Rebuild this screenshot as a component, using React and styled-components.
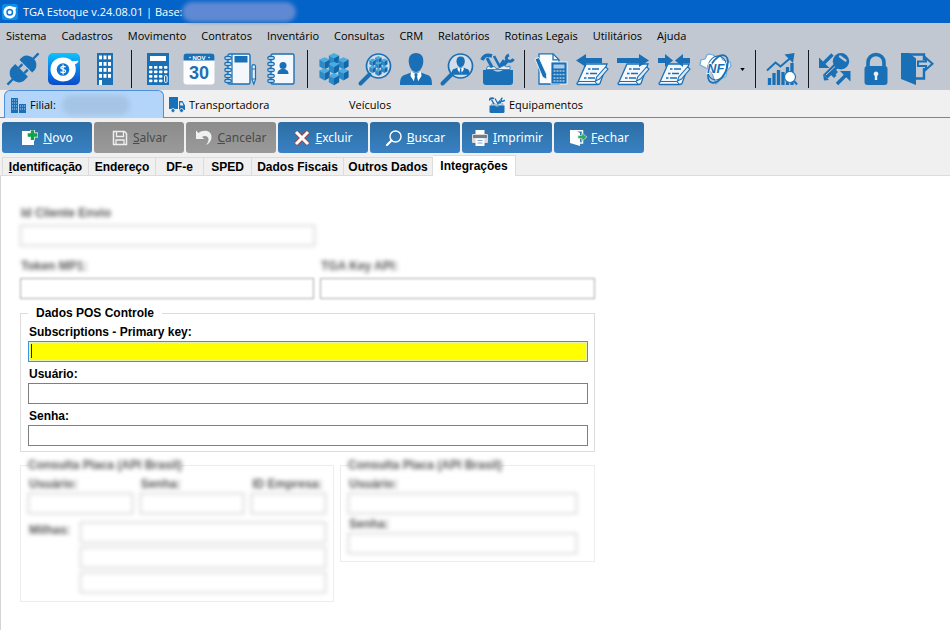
import React from "react";
import styled, { createGlobalStyle, css } from "styled-components";

const C = {
  blue: "#1a70b6",
  light: "#3aa0da",
  dark: "#145f9f",
  steel: "#c1c8d1",
  paper: "#f4f7fb",
};

const UI = '"Open Sans", "Noto Sans", sans-serif';
const FORM = '"Liberation Sans", Arial, sans-serif';

const GlobalStyle = createGlobalStyle`
  *, *::before, *::after { box-sizing: border-box; }
  html, body, #root { min-height: 100vh; }
  body { margin: 0; background: #fff; color: #000; font: 11px/16px ${UI}; }
  #root { display: flex; flex-direction: column; }
  button { font: inherit; color: inherit; border: 0; padding: 0; background: none; }
`;

/* ---------- window chrome ---------- */

const TitleBar = styled.header`
  display: flex;
  align-items: center;
  height: 23px;
  padding-left: 2px;
  color: #fff;
  background: #0463c8;
`;

const AppTitle = styled.h1`
  margin: 0 0 0 5px;
  font: 400 11px/16px ${UI};
  white-space: nowrap;
`;

const Redacted = styled.span`
  flex: none;
  width: ${(p) => p.$width}px;
  height: 20px;
  margin-left: ${(p) => p.$gap || 0}px;
  border-radius: 10px;
  background: ${(p) => p.$tone};
  filter: blur(2px);
`;

const MenuBar = styled.nav`
  display: flex;
  gap: 15px;
  height: 23px;
  padding-left: 6px;
  background: ${C.steel};
`;

const MenuItem = styled.button`
  line-height: 25px;
  height: 23px;
  white-space: nowrap;
`;

const ToolBar = styled.div`
  display: flex;
  align-items: center;
  height: 44px;
  padding: 2px 0 0 2px;
  overflow: hidden;
  background: ${C.steel};
`;

const ToolButton = styled.button`
  flex: none;
  display: flex;
  align-items: center;
  justify-content: center;
  width: 41px;
  height: 40px;
  svg { width: 32px; height: 32px; overflow: visible; }
`;

const Separator = styled.span`
  flex: none;
  display: flex;
  justify-content: center;
  width: 12px;
  &::before { content: ""; width: 1px; height: 38px; background: #15181c; }
`;

const DropButton = styled.button`
  flex: none;
  display: flex;
  align-items: center;
  justify-content: center;
  width: 14px;
  height: 40px;
  svg { width: 5px; height: 3px; }
`;

const WindowTabs = styled.div`
  display: flex;
  align-items: flex-end;
  height: 28px;
  padding-left: 4px;
  background: #f0f0f0;
  border-bottom: 1px solid #4c8fdc;
  box-shadow: 0 1px 0 #a9c9ec;
`;

const WindowTab = styled.button`
  display: flex;
  align-items: center;
  width: 160px;
  height: 24px;
  padding-left: 5px;
  gap: 4px;
  white-space: nowrap;
  svg { width: 16px; height: 16px; }
  ${(p) =>
    p.$active &&
    css`
      height: 28px;
      margin-bottom: -1px;
      border: 1px solid #4c8fdc;
      border-bottom: 0;
      border-radius: 6px 6px 0 0;
      background: #b3d5f9;
    `}
`;

/* ---------- command buttons ---------- */

const Commands = styled.div`
  display: flex;
  gap: 2px;
  padding: 4px 2px 3px;
  background: #f0f0f0;
`;

const Command = styled.button`
  display: flex;
  align-items: center;
  justify-content: center;
  gap: 4px;
  width: 90px;
  height: 31px;
  border-radius: 3px;
  font: 12px/16px "Noto Sans", sans-serif;
  color: #fff;
  background: linear-gradient(#2e6da4, #337ab7 60%, #3a80c4);
  &:disabled { color: #4a4a4a; background: linear-gradient(#8c8c8c, #9a9a9a); }
  svg { flex: none; width: 18px; height: 16px; }
`;

/* ---------- page tabs and form ---------- */

const PageTabs = styled.div`
  display: flex;
  align-items: flex-end;
  height: 20px;
  padding-left: 2px;
  background: #f0f0f0;
  border-bottom: 1px solid #dcdcdc;
`;

const PageTab = styled.button`
  flex: none;
  width: ${(p) => p.$width}px;
  height: 18px;
  font: 700 12px/18px ${FORM};
  white-space: nowrap;
  border: 1px solid #dcdcdc;
  border-width: 1px 1px 0 0;
  &:first-child { border-left-width: 1px; }
  ${(p) =>
    p.$active &&
    css`
      height: 21px;
      margin-bottom: -1px;
      background: #fff;
    `}
`;

const Page = styled.main`
  flex: 1;
  padding: 29px 19px 0;
  border-left: 1px solid #d4d4d4;
  background: #fff;
  font: 700 12px/16px ${FORM};
`;

const FormBody = styled.form`
  display: flex;
  flex-direction: column;
  max-width: 575px;
`;

const Columns = styled.div`
  display: grid;
  grid-template-columns: ${(p) => p.$cols};
  column-gap: ${(p) => p.$gap ?? 7}px;
  align-items: start;
  margin-top: ${(p) => p.$top || 0}px;
`;

const Field = styled.label`
  display: flex;
  flex-direction: column;
  gap: ${(p) => p.$gap || 1}px;
`;

const FieldName = styled.span`
  height: 16px;
  padding-left: 1px;
  white-space: nowrap;
  ${(p) => p.$hidden && css`color: #555; filter: blur(2px);`}
`;

const TextBox = styled.input`
  width: 100%;
  height: 21px;
  padding: 1px 3px;
  border: 1px solid #7f7f7f;
  border-radius: 0;
  outline: 0;
  background: #fff;
  font: 12px/16px ${FORM};
  ${(p) => p.$soft && css`border-color: #a8a8a8; filter: blur(1px);`}
  ${(p) => p.$hidden && css`border-color: #bcbcbc; filter: blur(2px);`}
  ${(p) =>
    p.$current &&
    css`
      border-color: #3c94e4;
      background: #ff0;
      box-shadow: inset 0 0 0 1px #e6f0b0;
    `}
`;

const CaretBox = styled.span`
  position: relative;
  display: block;
  height: 21px;
  &::after {
    content: "";
    position: absolute;
    left: 3px;
    top: 3px;
    width: 1px;
    height: 14px;
    background: #222;
  }
`;

const Group = styled.fieldset`
  min-width: 0;
  margin: ${(p) => p.$top || 0}px 0 0;
  padding: ${(p) => p.$pad};
  border: 1px solid ${(p) => (p.$hidden ? "#ececec" : "#dcdcdc")};
`;

const GroupName = styled.legend`
  height: 16px;
  padding: 0 8px;
  ${(p) => p.$hidden && css`padding: 0; color: #555; filter: blur(2px);`}
`;

const Stack = styled.div`
  display: flex;
  flex-direction: column;
  gap: ${(p) => p.$gap}px;
`;

/* ---------- icons ---------- */

const Svg = ({ children, box = 32, ...rest }) => (
  <svg viewBox={`0 0 ${box} ${box}`} fill="none" aria-hidden="true" {...rest}>
    {children}
  </svg>
);

const Plug = () => (
  <Svg>
    <g transform="rotate(-45 16 16)" fill={C.blue} stroke={C.blue}>
      <path d="M14 7v18H8a9 9 0 0 1-7-9 9 9 0 0 1 7-9z" stroke="none" />
      <path d="M20 7v18h4a9 9 0 0 0 7-9 9 9 0 0 0-7-9z" stroke="none" />
      <path d="M14 12.2h5M14 19.8h5M-6 16H4M28 16h10" strokeWidth="2.4" fill="none" />
    </g>
  </Svg>
);

const Brand = () => (
  <Svg>
    <defs>
      <linearGradient id="brandFill" x1="0" y1="0" x2="0" y2="1">
        <stop offset="0" stopColor="#0cc4fb" />
        <stop offset=".45" stopColor="#0a86ec" />
        <stop offset="1" stopColor="#0a4bc8" />
      </linearGradient>
    </defs>
    <rect width="32" height="32" rx="5" fill="url(#brandFill)" />
    <path d="M2.500 16.500C2.500 9 8 4.600 15 4.600c4 0 7 1.400 9 3.600l6.500-.4c-.6 1.800-1.700 3-3.600 3.500 3.200 9-2.500 17.200-11.700 17.200C8 28.500 2.500 23.500 2.500 16.500z" fill="#fff" />
    <circle cx="15" cy="16.500" r="6.300" fill="#0b76d8" />
    <path d="M17.600 14.200c-.6-1-4.600-1.500-4.800.6-.2 2 5 1.200 4.800 3.400-.2 2-4.300 1.700-5.200.4M15.100 11.600v9.800" stroke="#fff" strokeWidth="1.300" />
  </Svg>
);

const Building = () => (
  <Svg>
    <path d="M8 0h16v32H8z" fill={C.blue} />
    {[2.5, 9, 15, 21].map((y) =>
      [10, 14.500, 19].map((x) => <rect key={`${x}-${y}`} x={x} y={y} width="3" height="3.800" fill="#fff" />)
    )}
    <path d="M10 27h3v5h-3z" fill="#fff" />
  </Svg>
);

const Calculator = () => (
  <Svg>
    <rect x="5" width="22" height="32" fill={C.blue} />
    <rect x="8" y="3" width="16" height="5" fill="#fff" />
    {[13, 17.500, 22, 26.500].map((y, r) =>
      [7, 12, 17, 22].map((x, c) =>
        c === 3 && r > 1 ? null : <rect key={`${x}-${y}`} x={x} y={y} width="3.400" height="2.800" rx=".8" fill="#fff" />
      )
    )}
    <rect x="22.500" y="22.500" width="2.600" height="7" rx="1.300" stroke="#fff" />
  </Svg>
);

const Calendar = () => (
  <Svg>
    <rect x=".5" y=".5" width="31" height="31" rx="3" fill="#fdfdfe" />
    <path d="M.5 7.500V3.500a3 3 0 0 1 3-3h25a3 3 0 0 1 3 3v4z" fill={C.blue} />
    <circle cx="7" cy="4.500" r=".8" fill="#fff" />
    <circle cx="26" cy="4.500" r=".8" fill="#fff" />
    <text x="16" y="6.500" textAnchor="middle" fontFamily="Liberation Sans" fontWeight="700" fontSize="6" fill="#fff">NOV</text>
    <text x="16" y="25.500" textAnchor="middle" fontFamily="Liberation Sans" fontWeight="700" fontSize="18" fill={C.blue}>30</text>
  </Svg>
);

const Rings = () => (
  <g stroke={C.blue} strokeWidth="1.300" fill="#e3ebf4">
    {[3.500, 9.500, 15.500, 21.500, 26.500].map((y) => (
      <rect key={y} x=".8" y={y} width="6.500" height="3" rx="1.500" />
    ))}
  </g>
);

const Notebook = () => (
  <Svg>
    <rect x="4" y="1" width="22" height="30" rx="1.500" fill={C.paper} stroke={C.blue} strokeWidth="1.400" />
    <path d="M8 1v30" stroke={C.blue} strokeWidth="1.200" />
    <path d="M10.500 3h13v6.500h-13z" fill={C.blue} />
    <Rings />
    <path d="M28 13.500c0-2.500 3.500-2.500 3.500 0v13L29.800 31 28 26.500zM28 16h3.500M28 26h3.500" stroke={C.blue} strokeWidth="1.200" fill="#e6eef6" />
  </Svg>
);

const Contacts = () => (
  <Svg>
    <rect x="6" y="1" width="23" height="30" rx="1.500" fill={C.paper} stroke={C.blue} strokeWidth="1.400" />
    <g transform="translate(2 0)"><Rings /></g>
    <circle cx="18" cy="12.500" r="3.500" fill={C.blue} />
    <path d="M12.500 21c0-3.500 2-4.500 4.200-5h2.600c2.200.5 4.200 1.500 4.200 5z" fill={C.blue} />
  </Svg>
);

const CUBES = [[16, 2.8], [6.6, 7], [25.4, 7], [16, 11.5], [6.6, 18], [25.4, 18], [16, 22.8]];

const Cubes = () => (
  <g>
    {CUBES.map(([x, y]) => (
      <g key={`${x}-${y}`} transform={`translate(${x} ${y})`}>
        <path d="M0-2.8 5.200-.4 0 2.400-5.200-.4z" fill="#48ade0" />
        <path d="M-5.200-.4 0 2.400v7L-5.200 6.400z" fill="#2a8bcb" />
        <path d="M5.200-.4 0 2.400v7l5.200-3z" fill="#1366a8" />
      </g>
    ))}
  </g>
);

const CubeStack = () => <Svg><Cubes /></Svg>;

const Lens = () => (
  <g stroke={C.blue}>
    <circle cx="19.500" cy="13" r="12" strokeWidth="1.700" fill="#d3deea" />
    <path d="M10.500 21.500 1.500 30.500" strokeWidth="4" strokeLinecap="round" />
  </g>
);

const CubeSearch = () => (
  <Svg><Lens /><g transform="translate(9.500 3) scale(.62)"><Cubes /></g></Svg>
);

const Bust = () => (
  <g>
    <path d="M16 0c5 0 7.500 3.500 7.300 8.500C23 14 20 19 16 19S9 14 8.700 8.500C8.500 3.500 11 0 16 0z" fill={C.blue} />
    <path d="M0 32c0-7 1.500-9.500 6-10.500l5-2h10l5 2c4.500 1 6 3.500 6 10.500z" fill={C.blue} />
    <path d="M11 18.500 16 21l5-2.500.5 4.500L16 31.500 10.500 23z" fill="#fff" />
    <path d="m14.300 21h3.400l-.6 2.500 1.200 5.500-2.300 3-2.300-3 1.200-5.500z" fill={C.blue} />
  </g>
);

const Person = () => <Svg><Bust /></Svg>;

const PersonSearch = () => (
  <Svg><Lens /><g transform="translate(10.500 3.500) scale(.57)"><Bust /></g></Svg>
);

const Toolbox = () => (
  <Svg>
    <g stroke={C.blue}>
      <path d="m5 5 6 11" strokeWidth="3" />
      <path d="M0 7c2-5 5-5.500 10-4" strokeWidth="3.600" />
      <path d="M12 3 18 14M22 7l-5 7" strokeWidth="2.600" />
      <path d="M27 2c-3 1-3.500 4-1.500 5.500s4.500 1 6-1.500" strokeWidth="3" />
      <path d="M25 8l-7 8" strokeWidth="3.600" />
    </g>
    <path d="m4 16.500 2-3.500 3 1.500 3-1 3 2.500 4-2 3-1.500 3 1.500 3-1v3.500z" fill="#e6eef6" stroke={C.blue} strokeWidth=".8" />
    <path d="M1 17h30v12a3 3 0 0 1-3 3H4a3 3 0 0 1-3-3z" fill={C.blue} />
    <path d="M11 17q5 3.500 10 0z" fill="#b8d0e6" />
  </Svg>
);

const DocCalc = () => (
  <Svg>
    <path d="M4 .8h14l6 6V31H4z" fill="#fbfcfe" stroke={C.blue} strokeWidth="1.300" />
    <path d="M18 .8v6h6" stroke={C.blue} strokeWidth="1.300" />
    <path d="m0 6 4-1.500L11.500 21l.3 5.500L7.500 24z" fill={C.blue} stroke="#fff" strokeWidth=".8" />
    <rect x="16" y="9" width="16" height="22" fill={C.blue} stroke="#fff" strokeWidth=".8" />
    <path d="M18.500 11.500h11v4h-11z" fill="#a9cbe6" />
    {[18, 21.500, 25, 28].map((y) => (
      <path key={y} d={`M18.500 ${y}h11`} stroke="#a9cbe6" strokeWidth="1.600" strokeDasharray="2 1" />
    ))}
  </Svg>
);

const Sheet = () => (
  <g>
    <path d="M10 11h21l-7 19.500c-1 1-2 1-3 1H1.500C.5 31 1 30 2 29z" fill="#f4f7fb" stroke={C.blue} strokeWidth="1.300" />
    <path d="M12 16h11M10 20.500h11M8 25h11" stroke={C.blue} strokeWidth="1.300" strokeDasharray="2.500 1.500 9" />
    <path d="m29.500 14 2.500 2-8.500 10-4 2 1.200-4z" fill="#dce9f4" stroke={C.blue} strokeWidth="1.100" />
    <path d="M2 28.500h17l2 2.500" stroke={C.blue} strokeWidth="1.200" />
  </g>
);

const SheetLeft = () => (
  <Svg><Sheet /><path d="M0 7.500 10 1v4h16v5H10v4z" fill={C.blue} /></Svg>
);
const SheetRight = () => (
  <Svg><Sheet /><path d="M32 7.500 22 1v4H0v5h22v4z" fill={C.blue} /></Svg>
);
const SheetBoth = () => (
  <Svg><Sheet /><path d="M15 7.500 7 1v4H0v5h7v4zM17 7.500 25 1v4h7v5h-7v4z" fill={C.blue} /></Svg>
);

const Fiscal = () => (
  <Svg>
    <path d="m10 1 4 1 3 2 4-2 3 5 7 2 1 4-4 5-1 5-5 3-5 5-2-5-2-6-6-5-6-3 1-5 4-1 2-4z" fill="#fff" stroke="#6fa9d8" strokeWidth="1.200" />
    <ellipse cx="19" cy="16" rx="8" ry="15" transform="rotate(28 19 16)" stroke={C.blue} strokeWidth="1.700" />
    <ellipse cx="18" cy="15" rx="9.500" ry="12" transform="rotate(12 18 15)" stroke={C.blue} strokeWidth="1" />
    <text x="8" y="19.500" fontFamily="Liberation Sans" fontWeight="700" fontStyle="italic" fontSize="13" fill={C.blue} stroke="#fff" strokeWidth="1.500" paintOrder="stroke">NF</text>
  </Svg>
);

const Chart = () => (
  <Svg>
    <path d="M3.500 32v-7M8 32V20M12.500 32V17M17 32V19M21.500 32V14M26 32V10" stroke={C.blue} strokeWidth="3.300" />
    <path d="m1 17.500 8.500-8 5 4L25 4.500" stroke={C.blue} strokeWidth="2" />
    <path d="M18.500 1.500 28.500 0 27 10z" fill={C.blue} />
    <path d="m28 28 3 3.500" stroke={C.blue} strokeWidth="2" />
    <circle cx="24" cy="24" r="5.500" fill="#fff" stroke={C.blue} strokeWidth="1.200" />
  </Svg>
);

const KeySwap = () => (
  <Svg>
    <path d="M13.500 1.500 5 10M18 31l8.500-8.500" stroke={C.blue} strokeWidth="3.400" />
    <path d="M0 4.500V15h10.500zM21 18h10.500v10.500z" fill={C.blue} />
    <circle cx="22" cy="8.200" r="8.200" fill={C.blue} />
    <path d="M18 12 6.500 23.500" stroke={C.blue} strokeWidth="6" />
    <path d="m4 21 6 6-5 .5zM11 21l4 4 2.500-2.500-1-1 2.500-2.500-4-4z" fill={C.blue} />
    <path d="m21 3.500 5.500 4" stroke={C.steel} strokeWidth="2.200" strokeLinecap="round" />
    <path d="m7 22 9-8.500" stroke={C.steel} />
  </Svg>
);

const Padlock = () => (
  <Svg>
    <path d="M8 14V9.500a8 8 0 0 1 16 0V14" stroke={C.blue} strokeWidth="3.600" />
    <rect x="4.500" y="13" width="23" height="19" rx="3" fill={C.blue} />
    <path d="M16 18.500a2.500 2.500 0 0 1 1.200 4.600V27h-2.400v-3.900A2.500 2.500 0 0 1 16 18.500z" fill="#eaf1f8" />
  </Svg>
);

const ExitDoor = () => (
  <Svg>
    <path d="M8 1.500h15v6M23 15v10.500h-9" stroke={C.blue} strokeWidth="2.400" />
    <path d="M0 0h8l7 5.500V32L0 26z" fill={C.blue} />
    <path d="M17 8.500h8V5l6.500 5.800L25 16.600V13h-8z" fill={C.steel} stroke={C.blue} strokeWidth="2" />
  </Svg>
);

const Offices = () => (
  <Svg box={16}>
    <path d="M1 1h7v15H1zM9 7h7v9H9z" fill={C.blue} />
    <path d="M2 3h5M2 6h5M2 9h5M2 12h5M10 9h5M10 12h5" stroke="#b3d5f9" strokeWidth="1.200" strokeDasharray="1 1" />
  </Svg>
);

const Truck = () => (
  <Svg box={16}>
    <path d="M0 0h9v12H0zM10 4h3.500L16 8.500V13h-6z" fill={C.blue} />
    <path d="M11.200 5.500h2L14.500 8.500h-3.300z" fill="#e4eef7" />
    <circle cx="4" cy="13.500" r="2" fill={C.blue} stroke="#f0f0f0" strokeWidth=".8" />
    <circle cx="12.500" cy="13.500" r="2" fill={C.blue} stroke="#f0f0f0" strokeWidth=".8" />
  </Svg>
);

const Blank = () => <Svg box={16} />;

const NewIcon = () => (
  <Svg box={16}>
    <path d="M0 1h8v3.500h4V15H0z" fill="#fff" />
    <path d="M10.500 0v10.500M5 5h11" stroke="#fff" strokeWidth="4.800" />
    <path d="M10.500 .3v9.700M5.700 5h9.800" stroke="#12a14b" strokeWidth="3.400" />
  </Svg>
);
const SaveIcon = () => (
  <Svg box={16}>
    <path d="M1.500 1.500h11l2 2v11h-13z" stroke="#efefef" strokeWidth="1.500" />
    <path d="M4.500 2v4.500h7V2M4 14v-4h8v4" stroke="#efefef" strokeWidth="1.300" />
  </Svg>
);
const UndoIcon = () => (
  <Svg box={16}>
    <path d="M0 .5 2.500 3C7-.5 15 0 15.500 6.500c.2 4-2 7-5.500 8.500 2.500-3 3.500-6 1.500-8-1.500-1.500-4-1.200-5.500 0L8.500 9H0z" fill="#f0f0f0" />
  </Svg>
);
const DeleteIcon = () => (
  <Svg box={16}>
    <path d="m2 2 12 12M14 2 2 14" stroke="#a8433f" strokeWidth="4.800" />
    <path d="m2 2 12 12M14 2 2 14" stroke="#fff" strokeWidth="3" />
  </Svg>
);
const FindIcon = () => (
  <Svg box={16}>
    <circle cx="9.500" cy="6.500" r="5.500" stroke="#fff" strokeWidth="1.400" />
    <path d="M5.500 10.500 1 15" stroke="#fff" strokeWidth="2.200" strokeLinecap="round" />
  </Svg>
);
const PrintIcon = () => (
  <Svg box={16}>
    <path d="M3.500 0h9v5h-9z" fill="#fff" />
    <rect y="4" width="16" height="9" rx="1" fill="#d8dadd" />
    <path d="M1 5h14v3H1z" fill="#777d84" />
    <path d="M3.500 8.500h9V16h-9z" fill="#fff" />
    <path d="M5.500 10.500h5M5.500 13h5" stroke="#7fa3cc" />
  </Svg>
);
const CloseIcon = () => (
  <Svg box={16}>
    <path d="M0 0h5l5 3v13l-10-3z" fill="#fff" />
    <path d="M5 .7h7.500V5M12.500 9v4H10" stroke="#fff" strokeWidth="1.500" />
    <path d="M8 5.500h4V3l5 4-5 4V8.500H8z" fill="#2fa866" stroke="#dff3e7" strokeWidth=".6" />
  </Svg>
);

/* ---------- content ---------- */

const MENU = ["Sistema", "Cadastros", "Movimento", "Contratos", "Inventário", "Consultas", "CRM", "Relatórios", "Rotinas Legais", "Utilitários", "Ajuda"];

const TOOLS = [
  [["Conectar", Plug], ["TGA", Brand], ["Empresa", Building]],
  [["Calculadora", Calculator], ["Calendário", Calendar], ["Anotações", Notebook], ["Contatos", Contacts]],
  [["Produtos", CubeStack], ["Consultar produtos", CubeSearch], ["Clientes", Person], ["Consultar clientes", PersonSearch], ["Serviços", Toolbox]],
  [["Orçamento", DocCalc], ["Entradas", SheetLeft], ["Saídas", SheetRight], ["Transferências", SheetBoth], ["Nota fiscal", Fiscal]],
  [["Gráficos", Chart]],
  [["Trocar usuário", KeySwap], ["Bloquear", Padlock], ["Sair", ExitDoor]],
];

const COMMANDS = [
  ["Novo", NewIcon], ["Salvar", SaveIcon, true], ["Cancelar", UndoIcon, true], ["Excluir", DeleteIcon],
  ["Buscar", FindIcon], ["Imprimir", PrintIcon], ["Fechar", CloseIcon],
];

const PAGES = [
  ["Identificação", 87], ["Endereço", 67], ["DF-e", 48], ["SPED", 48],
  ["Dados Fiscais", 92], ["Outros Dados", 89], ["Integrações", 83],
];

const HiddenField = ({ name, soft }) => (
  <Field $gap={4}>
    <FieldName $hidden>{name}</FieldName>
    <TextBox $hidden={!soft} $soft={soft} />
  </Field>
);

export default function App() {
  return (
    <>
      <GlobalStyle />
      <TitleBar>
        <svg width="16" height="16" viewBox="0 0 32 32" aria-hidden="true">
          <rect width="32" height="32" rx="5" fill="#0b8fe8" />
          <path d="M3 16C3 8 9 4 16 4l13 3-2 4c3 10-3 18-11 18S3 23 3 16z" fill="#fff" />
          <circle cx="15.500" cy="16.500" r="5.500" fill="none" stroke="#0b76d8" strokeWidth="3" />
        </svg>
        <AppTitle>TGA Estoque v.24.08.01 | Base:</AppTitle>
        <Redacted $width={114} $tone="#5f8ad3" />
      </TitleBar>

      <MenuBar>
        {MENU.map((m) => <MenuItem key={m}>{m}</MenuItem>)}
      </MenuBar>

      <ToolBar role="toolbar">
        {TOOLS.map((group, i) => (
          <React.Fragment key={i}>
            {i > 0 && <Separator />}
            {group.map(([name, Icon]) => (
              <ToolButton key={name} aria-label={name}><Icon /></ToolButton>
            ))}
            {i === 3 && (
              <DropButton aria-label="Mais opções">
                <svg viewBox="0 0 6 4" aria-hidden="true"><path d="M0 0h6L3 4z" fill="#000" /></svg>
              </DropButton>
            )}
          </React.Fragment>
        ))}
      </ToolBar>

      <WindowTabs role="tablist">
        <WindowTab $active role="tab" aria-selected="true">
          <Offices />Filial:<Redacted $width={68} $gap={2} $tone="#a6c5e6" />
        </WindowTab>
        <WindowTab role="tab"><Truck />Transportadora</WindowTab>
        <WindowTab role="tab"><Blank />Veículos</WindowTab>
        <WindowTab role="tab"><Toolbox />Equipamentos</WindowTab>
      </WindowTabs>

      <Commands>
        {COMMANDS.map(([name, Icon, off]) => (
          <Command key={name} disabled={off}>
            <Icon />
            <span><u>{name[0]}</u>{name.slice(1)}</span>
          </Command>
        ))}
      </Commands>

      <PageTabs role="tablist">
        {PAGES.map(([name, width], i) => (
          <PageTab key={name} role="tab" $width={width} $active={i === 6} aria-selected={i === 6}>
            {i === 0 ? <><u>I</u>dentificação</> : name}
          </PageTab>
        ))}
      </PageTabs>

      <Page>
        <FormBody>
          <Columns $cols="295fr 280fr" $gap={0}>
            <HiddenField name="Id Cliente Envio" />
          </Columns>
          <Columns $cols="294fr 275fr" $gap={6} $top={12}>
            <HiddenField name="Token MP1:" soft />
            <HiddenField name="TGA Key API:" soft />
          </Columns>

          <Group $top={6} $pad="3px 6px 5px 7px">
            <GroupName>Dados POS Controle</GroupName>
            <Stack $gap={4}>
              <Field>
                <FieldName>Subscriptions - Primary key:</FieldName>
                <CaretBox><TextBox $current /></CaretBox>
              </Field>
              <Field>
                <FieldName>Usuário:</FieldName>
                <TextBox />
              </Field>
              <Field>
                <FieldName>Senha:</FieldName>
                <TextBox type="password" />
              </Field>
            </Stack>
          </Group>

          <Columns $cols="314fr 255fr" $gap={6} $top={5}>
            <Group $hidden $pad="3px 7px 8px">
              <GroupName $hidden>Consulta Placa (API Brasil)</GroupName>
              <Columns $cols="105fr 105fr 75fr">
                <Field><FieldName $hidden>Usuário:</FieldName><TextBox $hidden /></Field>
                <Field><FieldName $hidden>Senha:</FieldName><TextBox $hidden /></Field>
                <Field><FieldName $hidden>ID Empresa:</FieldName><TextBox $hidden /></Field>
              </Columns>
              <Columns $cols="45px 1fr" $top={8}>
                <FieldName $hidden>Milhas:</FieldName>
                <Stack $gap={4}>
                  <TextBox $hidden aria-label="Linha 1" />
                  <TextBox $hidden aria-label="Linha 2" />
                  <TextBox $hidden aria-label="Linha 3" />
                </Stack>
              </Columns>
            </Group>
            <Group $hidden $pad="3px 17px 7px 7px">
              <GroupName $hidden>Consulta Placa (API Brasil)</GroupName>
              <Stack $gap={2}>
                <Field><FieldName $hidden>Usuário:</FieldName><TextBox $hidden /></Field>
                <Field><FieldName $hidden>Senha:</FieldName><TextBox $hidden /></Field>
              </Stack>
            </Group>
          </Columns>
        </FormBody>
      </Page>
    </>
  );
}
